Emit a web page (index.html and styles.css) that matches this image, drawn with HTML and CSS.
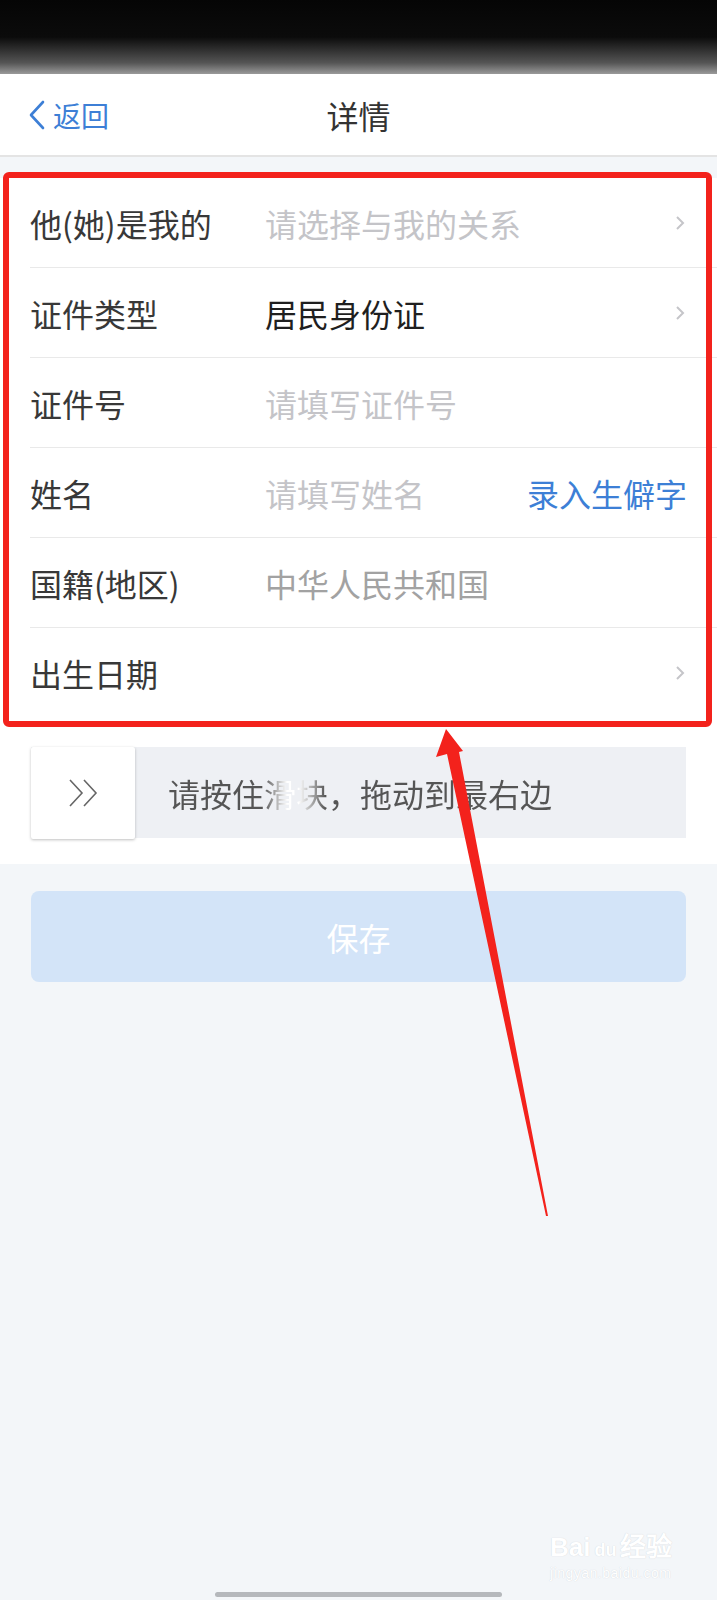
FILE: index.html
```html
<!DOCTYPE html>
<html lang="zh-CN">
  <head>
    <meta charset="UTF-8" />
    <meta name="viewport" content="width=device-width, initial-scale=1.0" />
    <title>详情</title>
    <link rel="stylesheet" href="styles.css">
  </head>
  <body>
    <div class="status-bar"></div>

    <header class="nav-bar">
      <a class="back" href="#">
        <svg class="back-icon" width="18" height="30" viewBox="0 0 18 30">
          <polyline points="15,2 3,15 15,28" fill="none" stroke="#3d7fd6" stroke-width="2.6" stroke-linejoin="round" stroke-linecap="round" />
        </svg>
        返回
      </a>
      <h1>详情</h1>
      <span></span>
    </header>

    <main class="page">
      <section class="card">
        <div class="form">
          <div class="row">
            <span class="label">他(她)是我的</span>
            <span class="value placeholder">请选择与我的关系</span>
            <svg class="arrow" width="10" height="16" viewBox="0 0 10 16"><polyline points="2,2 8,8 2,14" fill="none" stroke="#c5c5c9" stroke-width="2" /></svg>
          </div>
          <div class="row">
            <span class="label">证件类型</span>
            <span class="value">居民身份证</span>
            <svg class="arrow" width="10" height="16" viewBox="0 0 10 16"><polyline points="2,2 8,8 2,14" fill="none" stroke="#c5c5c9" stroke-width="2" /></svg>
          </div>
          <div class="row">
            <span class="label">证件号</span>
            <span class="value placeholder">请填写证件号</span>
          </div>
          <div class="row">
            <span class="label">姓名</span>
            <span class="value placeholder">请填写姓名</span>
            <a class="link" href="#">录入生僻字</a>
          </div>
          <div class="row">
            <span class="label">国籍(地区)</span>
            <span class="value muted">中华人民共和国</span>
          </div>
          <div class="row">
            <span class="label">出生日期</span>
            <span class="value"></span>
            <svg class="arrow" width="10" height="16" viewBox="0 0 10 16"><polyline points="2,2 8,8 2,14" fill="none" stroke="#c5c5c9" stroke-width="2" /></svg>
          </div>
        </div>

        <div class="verify">
          <div class="slider">
            <div class="knob">
              <svg width="34" height="30" viewBox="0 0 34 30">
                <polyline points="4,2 16,15 4,28" fill="none" stroke="#666" stroke-width="1.6" />
                <polyline points="18,2 30,15 18,28" fill="none" stroke="#666" stroke-width="1.6" />
              </svg>
            </div>
            <span class="slider-text">请按住滑块，拖动到最右边</span>
          </div>
        </div>
      </section>

      <button class="save" type="button">保存</button>
    </main>

    <!-- annotation drawn over the screenshot -->
    <div class="mark-box"></div>
    <svg class="mark-arrow" width="717" height="1600" viewBox="0 0 717 1600">
      <polygon points="446,729 436,757 447,754 546,1216 548,1216 459,752 463,751" fill="#f3221c" />
    </svg>

    <div class="watermark">
      <div class="wm-logo">Bai<span class="paw">du</span>经验</div>
      <div class="wm-url">jingyan.baidu.com</div>
    </div>

    <div class="home-indicator"></div>
  </body>
</html>
```

FILE: styles.css
```css
body {
  margin: 0;
  font-family: "Noto Sans CJK SC", "Noto Sans", sans-serif;
  background: #f3f6f9;
  color: #353535;
  width: 717px;
  min-height: 1600px;
  position: relative;
  overflow: hidden;
}

.status-bar {
  height: 74px;
  background: linear-gradient(180deg, #050505 0%, #0b0b0b 50%, #555 85%, #9a9a9a 100%);
}

.nav-bar {
  height: 81px;
  background: #fff;
  border-bottom: 2px solid #e4e4e4;
  display: grid;
  grid-template-columns: 1fr auto 1fr;
  align-items: center;
}

.back {
  display: flex;
  align-items: center;
  gap: 7px;
  padding-left: 28px;
  color: #3d7fd6;
  font-size: 28px;
  text-decoration: none;
}

.nav-bar h1 {
  margin: 0;
  font-size: 32px;
  font-weight: 400;
  color: #333;
}

.page {
  padding-top: 21px;
}

.card {
  background: #fff;
}

.row {
  height: 89px;
  margin-left: 30px;
  padding-right: 30px;
  border-bottom: 1px solid #e9e9e9;
  display: flex;
  align-items: center;
  font-size: 32px;
}

.row:last-child {
  border-bottom: none;
}

.label {
  width: 235px;
  flex-shrink: 0;
  color: #383838;
}

.value {
  flex: 1;
  color: #1f1f1f;
}

.placeholder {
  color: #c4c4c8;
}

.muted {
  color: #a2a2a2;
}

.arrow {
  margin-right: 2px;
}

.link {
  color: #3d7fd6;
  text-decoration: none;
}

.verify {
  padding: 30px 31px 26px;
}

.slider {
  height: 91px;
  background: #eef0f4;
  display: flex;
  align-items: center;
}

.knob {
  width: 104px;
  height: 92px;
  background: #fff;
  border-radius: 2px;
  box-shadow: 0 1px 3px rgba(0, 0, 0, 0.25);
  display: flex;
  align-items: center;
  justify-content: center;
  flex-shrink: 0;
}

.slider-text {
  margin-left: 33px;
  font-size: 32px;
  background: linear-gradient(90deg, #555 0%, #555 25%, #fff 31%, #fff 34%, #555 41%, #555 100%);
  -webkit-background-clip: text;
  background-clip: text;
  color: transparent;
}

.save {
  display: block;
  margin: 27px 31px 0;
  width: calc(100% - 62px);
  height: 91px;
  border: none;
  border-radius: 8px;
  background: #d3e4f8;
  color: #fff;
  font-family: inherit;
  font-size: 32px;
}

.mark-box {
  position: absolute;
  left: 3px;
  top: 172px;
  width: 697px;
  height: 543px;
  border: 6px solid #f3221c;
  border-radius: 6px;
}

.mark-arrow {
  position: absolute;
  left: 0;
  top: 0;
  pointer-events: none;
}

.watermark {
  position: absolute;
  left: 550px;
  top: 1532px;
  color: #fff;
  text-shadow: 0 0 1px #c9ced4;
  font-family: "Liberation Sans", sans-serif;
}

.wm-logo {
  font-size: 26px;
  font-weight: 700;
  line-height: 30px;
}

.paw {
  font-size: 18px;
  margin: 0 4px;
}

.wm-url {
  font-size: 14px;
  letter-spacing: 0.5px;
}

.home-indicator {
  position: absolute;
  left: 215px;
  bottom: 3px;
  width: 287px;
  height: 5px;
  border-radius: 3px;
  background: #b5b8bc;
}
```
